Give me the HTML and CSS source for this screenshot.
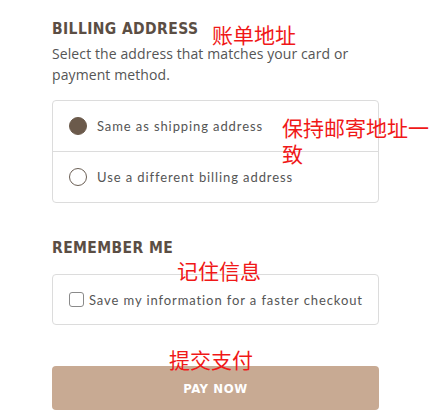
FILE: index.html
```html
<!DOCTYPE html>
<html>
<head>
<meta charset="utf-8">
<link rel="stylesheet" href="styles.css">
</head>
<body>
<div class="page">
  <section class="section">
    <h2 class="heading">BILLING ADDRESS</h2>
    <p class="desc">Select the address that matches your card or payment method.</p>
    <div class="box">
      <label class="row">
        <span class="radio checked"></span>
        <span class="label">Same as shipping address</span>
      </label>
      <label class="row divider">
        <span class="radio"></span>
        <span class="label">Use a different billing address</span>
      </label>
    </div>
  </section>
  <section class="section remember">
    <h2 class="heading">REMEMBER ME</h2>
    <div class="box">
      <label class="row check-row">
        <span class="checkbox"></span>
        <span class="label">Save my information for a faster checkout</span>
      </label>
    </div>
  </section>
  <button class="pay">PAY NOW</button>
  <span class="note note-1">账单地址</span>
  <span class="note note-2">保持邮寄地址一<br>致</span>
  <span class="note note-3">记住信息</span>
  <span class="note note-4">提交支付</span>
</div>
</body>
</html>
```
FILE: styles.css
```css
* { box-sizing: border-box; }
body {
  margin: 0;
  background: #fff;
  font-family: "Open Sans", "Liberation Sans", sans-serif;
}
.page {
  position: relative;
  width: 443px;
  height: 419px;
  padding: 18px 0 0 52px;
}
.section { width: 327px; }
.heading {
  margin: 0;
  font-family: "DejaVu Sans Condensed", "DejaVu Sans", sans-serif;
  font-weight: bold;
  font-size: 15.5px;
  letter-spacing: 0.4px;
  line-height: 22px;
  color: #5b4e44;
}
.desc {
  margin: 3px 0 0;
  font-size: 14px;
  letter-spacing: 0.1px;
  line-height: 21px;
  color: #555;
}
.box {
  margin-top: 15px;
  border: 1px solid #dcdcdc;
  border-radius: 4px;
}
.row {
  display: flex;
  align-items: center;
  height: 50px;
  padding-left: 16px;
}
.divider { border-top: 1px solid #dcdcdc; height: 51px; }
.radio {
  width: 18px;
  height: 18px;
  border-radius: 50%;
  border: 1.5px solid #6b5f55;
  margin-right: 10px;
  flex: none;
}
.radio.checked { background: #6b5a4b; border-color: #6b5a4b; }
.label {
  font-family: "Lato", "Open Sans", sans-serif;
  font-size: 13px;
  letter-spacing: 0.9px;
  color: #555;
}
.remember { margin-top: 34px; }
.remember .box { margin-top: 15px; }
.check-row { height: 49px; }
.checkbox {
  width: 15px;
  height: 15px;
  border: 1px solid #8a8a8a;
  border-radius: 3px;
  margin-right: 5px;
  flex: none;
}
.pay {
  display: block;
  margin-top: 41px;
  width: 327px;
  height: 44px;
  border: 0;
  border-radius: 4px;
  background: #c8aa93;
  color: #fff;
  font-family: "DejaVu Sans Condensed", "DejaVu Sans", sans-serif;
  font-weight: bold;
  font-size: 13px;
  letter-spacing: 0.6px;
}
.note {
  position: absolute;
  color: #f01818;
  font-family: "Noto Sans CJK SC", sans-serif;
  font-size: 21px;
  line-height: 26px;
}
.note-1 { left: 212px; top: 21px; }
.note-2 { left: 282px; top: 114px; }
.note-3 { left: 177px; top: 257px; }
.note-4 { left: 169px; top: 346px; }
```
